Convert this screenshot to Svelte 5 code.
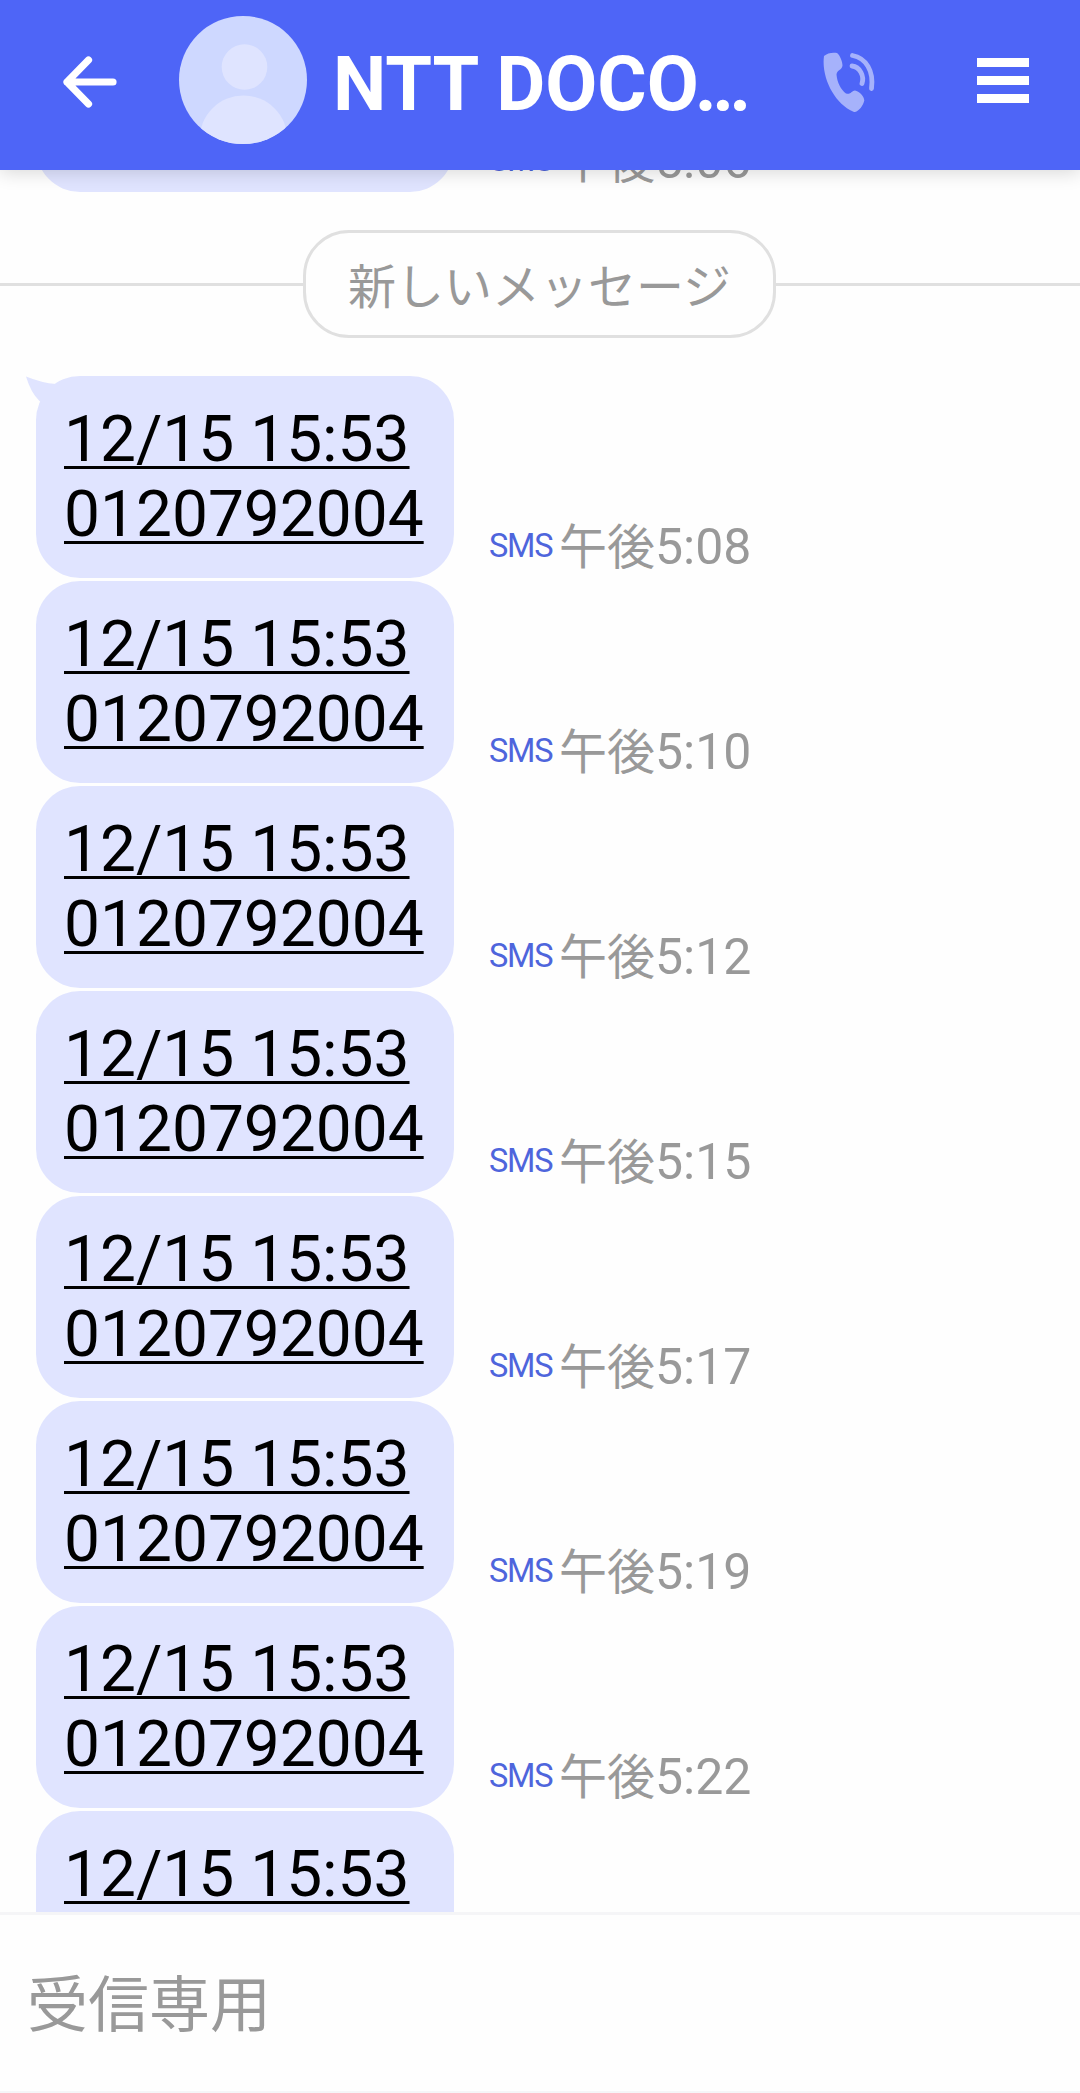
<script lang="ts">
	type Message = {
		lines: string[];
		time?: string;
		tail?: boolean;
	};

	const contact = 'NTT DOCO…';
	const lines = ['12/15 15:53', '0120792004'];

	const earlier: Message[] = [{ lines: [], time: '5:06' }];
	const messages: Message[] = [
		{ lines, time: '5:08', tail: true },
		{ lines, time: '5:10' },
		{ lines, time: '5:12' },
		{ lines, time: '5:15' },
		{ lines, time: '5:17' },
		{ lines, time: '5:19' },
		{ lines, time: '5:22' },
		{ lines: lines.slice(0, 1) }
	];
</script>

{#snippet row(message: Message)}
	<li class="row">
		<div class="bubble">
			{#if message.tail}
				<svg class="tail" viewBox="0 0 40 30" aria-hidden="true">
					<path d="M0 0.5Q16 7 30 8L40 10L20 30L13.500 25Q5 17 0 0.5Z" fill="#e0e4ff" />
				</svg>
			{/if}
			{#each message.lines as line}
				<a class="link" href="#top">{line}</a>
			{/each}
		</div>
		{#if message.time}
			<div class="meta">
				<span class="kind">SMS</span>
				<time class="time">午後<span class="clock">{message.time}</span></time>
			</div>
		{/if}
	</li>
{/snippet}

<div class="screen">
	<header class="bar">
		<button class="back" type="button" aria-label="戻る">
			<svg width="54" height="52" viewBox="0 0 54 52" aria-hidden="true">
				<path d="M25.5 4L4 26L25.5 48M4 26H50" fill="none" stroke="#fff" stroke-width="7.2" stroke-linecap="round" stroke-linejoin="round" />
			</svg>
		</button>
		<svg class="avatar" width="128" height="128" viewBox="0 0 128 128" aria-hidden="true">
			<defs>
				<clipPath id="avatar-clip"><circle cx="64" cy="64" r="64" /></clipPath>
			</defs>
			<g clip-path="url(#avatar-clip)">
				<rect width="128" height="128" fill="#ced8ff" />
				<circle cx="65.5" cy="51" r="22.8" fill="#dfe4ff" />
				<circle cx="64.5" cy="123.5" r="44" fill="#dfe4ff" />
			</g>
		</svg>
		<h1 class="name">{contact}</h1>
		<button class="call" type="button" aria-label="電話">
			<svg width="54" height="60" viewBox="0 0 54 60" aria-hidden="true">
				<path d="M1 4C4 1 10 0 14 1C17 3 19.500 10 19.500 13.500C19 18 14 18 13.500 22.500C14 30 18 38 23 41.500C28 43 28 39 32 38.500C36 39 41 44 41.300 48.500C40 54 36 59 32 60Q31 60 30 59.500C12 52 -2 26 1 4Z" fill="#a6b2fb" />
				<path d="M29.500 3.500C43 6 51 19 48.500 36.500M29 14C37 15 41.500 24 39 31.500" fill="none" stroke="#a6b2fb" stroke-width="4.800" stroke-linecap="round" />
			</svg>
		</button>
		<button class="menu" type="button" aria-label="メニュー">
			<span></span>
			<span></span>
			<span></span>
		</button>
	</header>

	<main class="thread">
		<ul class="list earlier">
			{#each earlier as message}
				{@render row(message)}
			{/each}
		</ul>
		<div class="divider">
			<span class="pill">新しいメッセージ</span>
		</div>
		<ul class="list">
			{#each messages as message}
				{@render row(message)}
			{/each}
		</ul>
	</main>

	<footer class="compose">受信専用</footer>
</div>

<style>
	:global(body) {
		margin: 0;
		background: #fefefe;
	}

	.screen {
		display: flex;
		flex-direction: column;
		width: 1080px;
		height: 2093px;
		overflow: hidden;
		background: #fefefe;
		font-family: Roboto, 'Noto Sans CJK JP', sans-serif;
	}

	button {
		all: unset;
		display: flex;
		flex: none;
	}

	.bar {
		position: relative;
		z-index: 1;
		display: flex;
		flex: none;
		align-items: center;
		box-sizing: border-box;
		height: 170px;
		padding: 0 51px 9px 63px;
		background: #4e65f7;
		box-shadow: 0 2px 18px rgb(0 0 0 / 16%);
	}

	.back {
		margin-top: 2px;
	}

	.avatar {
		flex: none;
		margin: -1px 0 0 62px;
	}

	.name {
		width: 416px;
		margin: 6px 0 0 26px;
		color: #fff;
		font-size: 75.5px;
		font-weight: 700;
		line-height: 96px;
		white-space: nowrap;
	}

	.call {
		margin: 2px 0 0 74px;
	}

	.menu {
		flex-direction: column;
		gap: 9px;
		margin-left: auto;
	}

	.menu span {
		width: 52px;
		height: 9px;
		background: #fff;
	}

	.thread {
		display: flex;
		flex: 1;
		flex-direction: column;
		min-height: 0;
		overflow: hidden;
	}

	.list {
		display: flex;
		flex: none;
		flex-direction: column;
		gap: 3px;
		margin: 0;
		padding: 0;
		list-style: none;
	}

	/* scrolled most of the way under the header */
	.earlier {
		margin-top: -180px;
	}

	.row {
		display: flex;
		align-items: flex-end;
		padding-left: 36px;
	}

	.bubble {
		position: relative;
		display: flex;
		flex-direction: column;
		align-items: flex-start;
		box-sizing: border-box;
		width: 418px;
		height: 202px;
		padding: 26px 28px;
		border-radius: 44px;
		background: #e0e4ff;
	}

	.tail {
		position: absolute;
		top: 0;
		left: -10px;
		width: 40px;
		height: 30px;
	}

	.link {
		color: #000;
		font-size: 64px;
		line-height: 75px;
		text-decoration: underline;
		text-decoration-skip-ink: none;
		text-decoration-thickness: 3px;
		text-underline-offset: 5px;
	}

	.meta {
		display: flex;
		align-items: baseline;
		margin-left: 35px;
		line-height: 50px;
	}

	.kind {
		position: relative;
		top: -7px;
		width: 70px;
		color: #4e65dc;
		font-size: 32.5px;
		letter-spacing: -1.2px;
	}

	.time {
		color: #999;
		font-size: 48px;
	}

	.clock {
		font-size: 50px;
	}

	.divider {
		display: flex;
		flex: none;
		align-items: center;
		margin: 38px 0;
	}

	.divider::before,
	.divider::after {
		flex: 1;
		height: 3px;
		background: #e0e0e0;
		content: '';
	}

	.divider::after {
		flex-basis: 1px;
	}

	.pill {
		box-sizing: border-box;
		width: 473px;
		height: 108px;
		padding-top: 4px;
		border: 3px solid #e0e0e0;
		border-radius: 46px;
		color: #999;
		font-size: 48px;
		line-height: 102px;
		text-align: center;
	}

	.compose {
		flex: none;
		box-sizing: border-box;
		height: 181px;
		padding: 3px 0 0 27px;
		border-top: 3px solid #f5f5f7;
		border-bottom: 2px solid #f5f5f7;
		color: #999;
		font-size: 61px;
		line-height: 176px;
	}
</style>
